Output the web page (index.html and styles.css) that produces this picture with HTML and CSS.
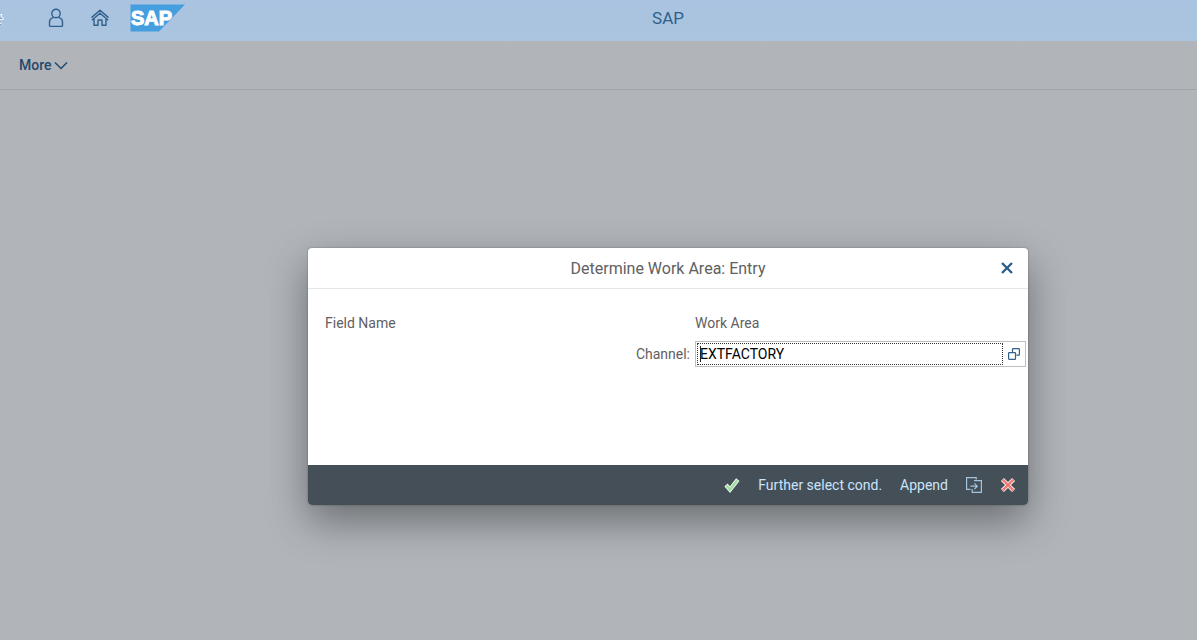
FILE: index.html
```html
<!DOCTYPE html>
<html lang="en">
<head>
<meta charset="utf-8">
<title>SAP</title>
<link rel="stylesheet" href="styles.css">
</head>
<body>
<header class="shell">
  <svg class="edge-mark" width="4" height="18" viewBox="0 0 4 18" aria-hidden="true"><path d="M0 5.5H1.5V8.5H3V10.5H0M0 14.5H1.5" stroke="#f0f5fa" stroke-width="1.2" fill="none"/><path d="M0 9.2H2.5M0 15.6H1" stroke="#7d93aa" stroke-width="1" fill="none"/></svg>
  <nav class="shell-nav">
    <button class="icon-button" aria-label="User">
      <svg width="16" height="20" viewBox="0 0 16 20"><circle cx="8" cy="5.5" r="4.2"/><path d="M5.5 9.4C3 10.2 1.5 12 1.5 14.2V17.5Q1.5 18.4 2.4 18.4H13.6Q14.5 18.4 14.5 17.5V14.2C14.5 12 13 10.2 10.5 9.4"/></svg>
    </button>
    <button class="icon-button" aria-label="Home">
      <svg width="20" height="20" viewBox="0 0 20 20"><path d="M1.5 9.6 10 2.2 18.5 9.6M1.8 12.2 10 5.2 18.2 12.2M4 11V17.3H8V12.7Q8 12 8.7 12H11.3Q12 12 12 12.7V17.3H16V11"/></svg>
    </button>
  </nav>
  <a class="logo" href="#" aria-label="SAP home">
    <svg width="56" height="28" viewBox="0 0 56 28"><path d="M0.5 0.5H55L29 27.5H0.5Z" fill="#459fde"/><text class="logo-text" x="1" y="21">SAP</text></svg>
  </a>
  <h1 class="shell-title">SAP</h1>
</header>
<div class="toolbar">
  <button class="more">More
    <svg width="14" height="9" viewBox="0 0 14 9"><path d="M1 1.5 7 7.5 13 1.5"/></svg>
  </button>
</div>
<main class="overlay">
  <section class="dialog" role="dialog" aria-labelledby="dialog-title">
    <div class="dialog-head">
      <h2 class="dialog-title" id="dialog-title">Determine Work Area: Entry</h2>
      <button class="close" aria-label="Close"><svg width="12" height="12" viewBox="0 0 12 12"><path d="M1 1 11 11M11 1 1 11"/></svg></button>
    </div>
    <form class="dialog-body">
      <span class="column-head">Field Name</span>
      <span class="column-head">Work Area</span>
      <label class="field-label" for="channel">Channel:</label>
      <div class="field">
        <input class="field-input" id="channel" type="text" value="EXTFACTORY">
        <span class="caret"></span>
        <button class="value-help" type="button" aria-label="Value help"><svg width="12" height="12" viewBox="0 0 12 12"><path d="M4.5 4V1.2Q4.5.6 5.1.6H10.8Q11.4.6 11.4 1.2V6.5Q11.4 7.1 10.8 7.1H8.3"/><rect x="0.6" y="4.6" width="6.9" height="6.8" rx="0.7"/></svg></button>
      </div>
    </form>
    <footer class="dialog-foot">
      <button class="foot-button" aria-label="Continue"><svg width="16" height="16" viewBox="0 0 16 16"><path d="M2 8 6 12.6 13.8 2.6" fill="none" stroke="#f2faef" stroke-width="4.2"/><path d="M2.6 8.6 6 12.6 13.3 3.2" fill="none" stroke="#a3dda3" stroke-width="2.6"/></svg></button>
      <button class="foot-button">Further select cond.</button>
      <button class="foot-button">Append</button>
      <button class="foot-button" aria-label="Multiple selection"><svg width="16" height="16" viewBox="0 0 16 16" fill="none" stroke="#a5c5de" stroke-width="1.2"><path d="M4.5 12.4H.6V.6H10.2V2.5M8 3.6H15.4V15.4H6.2V12"/><path d="M4.4 9.2H11M8.5 6.4 11.3 9.2 8.5 12"/></svg></button>
      <button class="foot-button" aria-label="Cancel"><svg width="16" height="16" viewBox="0 0 16 16"><path d="M2.4 2.4 13.6 13.6M13.6 2.4 2.4 13.6" stroke="#fff3f1" stroke-width="4.2"/><path d="M2.6 2.6 13.4 13.4M13.4 2.6 2.6 13.4" stroke="#f07a76" stroke-width="2.4"/></svg></button>
    </footer>
  </section>
</main>
</body>
</html>
```
FILE: styles.css
```css
* { box-sizing: border-box; }
body {
  margin: 0;
  min-height: 100vh;
  background: #b1b5ba;
  font-family: Roboto, "Liberation Sans", sans-serif;
  font-size: 14px;
  color: #5f6062;
  overflow: hidden;
}
button { border: 0; padding: 0; background: none; font: inherit; color: inherit; cursor: pointer; }
svg { display: block; flex: none; }

.shell {
  position: relative;
  display: flex;
  align-items: center;
  height: 41px;
  padding-bottom: 5px;
  background: linear-gradient(#a9c3e0, #abc5e0);
  color: #2f608c;
}
.edge-mark { margin-right: 44px; }
.shell-nav { display: flex; gap: 26px; margin-right: 20px; }
.icon-button svg { fill: none; stroke: #2f608c; stroke-width: 1.4; stroke-linejoin: round; }
.logo-text {
  font: bold 20px "Liberation Sans", Arial, sans-serif;
  fill: #fff;
  stroke: #fff;
  stroke-width: 1px;
}
.shell-title {
  position: absolute;
  left: 139px;
  right: 0;
  margin: 0;
  text-align: center;
  font-size: 17px;
  font-weight: 400;
  line-height: 36px;
  pointer-events: none;
}
.toolbar {
  display: flex;
  align-items: center;
  height: 49px;
  padding: 0 19px;
  border-bottom: 1px solid #9ca5aa;
}
.more { display: flex; align-items: center; gap: 2px; color: #24496a; font-weight: 500; }
.more svg { fill: none; stroke: #24496a; stroke-width: 1.5; }

.overlay {
  position: absolute;
  inset: 0;
  display: grid;
  place-items: center;
  padding: 113px 0 0 139px;
  pointer-events: none;
}
.dialog {
  width: 720px;
  max-width: 100%;
  border-radius: 4px;
  overflow: hidden;
  background: #fff;
  box-shadow: 0 0 2px rgba(0, 0, 0, .35), 0 16px 40px rgba(0, 0, 0, .4);
  pointer-events: auto;
}
.dialog-head {
  display: grid;
  grid-template-columns: 42px 1fr 42px;
  align-items: center;
  height: 41px;
  border-bottom: 1px solid #e5e6e6;
}
.dialog-title { grid-column: 2; margin: 0; text-align: center; font-size: 16px; font-weight: 400; }
.close { display: grid; place-items: center; height: 40px; }
.close svg { stroke: #2c5f8c; stroke-width: 2.4; }
.dialog-body {
  display: grid;
  grid-template-columns: 365px 1fr;
  grid-template-rows: 32px 26px;
  column-gap: 5px;
  align-content: start;
  min-height: 176px;
  padding: 20px 2px 0 17px;
}
.column-head { line-height: 28px; }
.field-label { text-align: right; line-height: 26px; }
.field {
  position: relative;
  display: flex;
  align-items: center;
  border: 1px solid #bfbfbf;
  padding: 1px 0 1px 1px;
}
.field-input {
  flex: 1;
  min-width: 0;
  height: 22px;
  padding: 0 2px;
  border: 1px dotted #333;
  background: #fff;
  font: inherit;
  color: #000;
  outline: 0;
}
.caret { position: absolute; left: 4px; top: 4px; width: 1px; height: 16px; background: #222; }
.value-help { display: grid; place-items: center; width: 22px; height: 22px; }
.value-help svg { fill: none; stroke: #346187; stroke-width: 1.2; }
.dialog-foot {
  display: flex;
  align-items: center;
  justify-content: flex-end;
  gap: 18px;
  height: 40px;
  padding-right: 12px;
  background: #444f58;
  color: #cae4fb;
}
.foot-button { white-space: nowrap; }
```
